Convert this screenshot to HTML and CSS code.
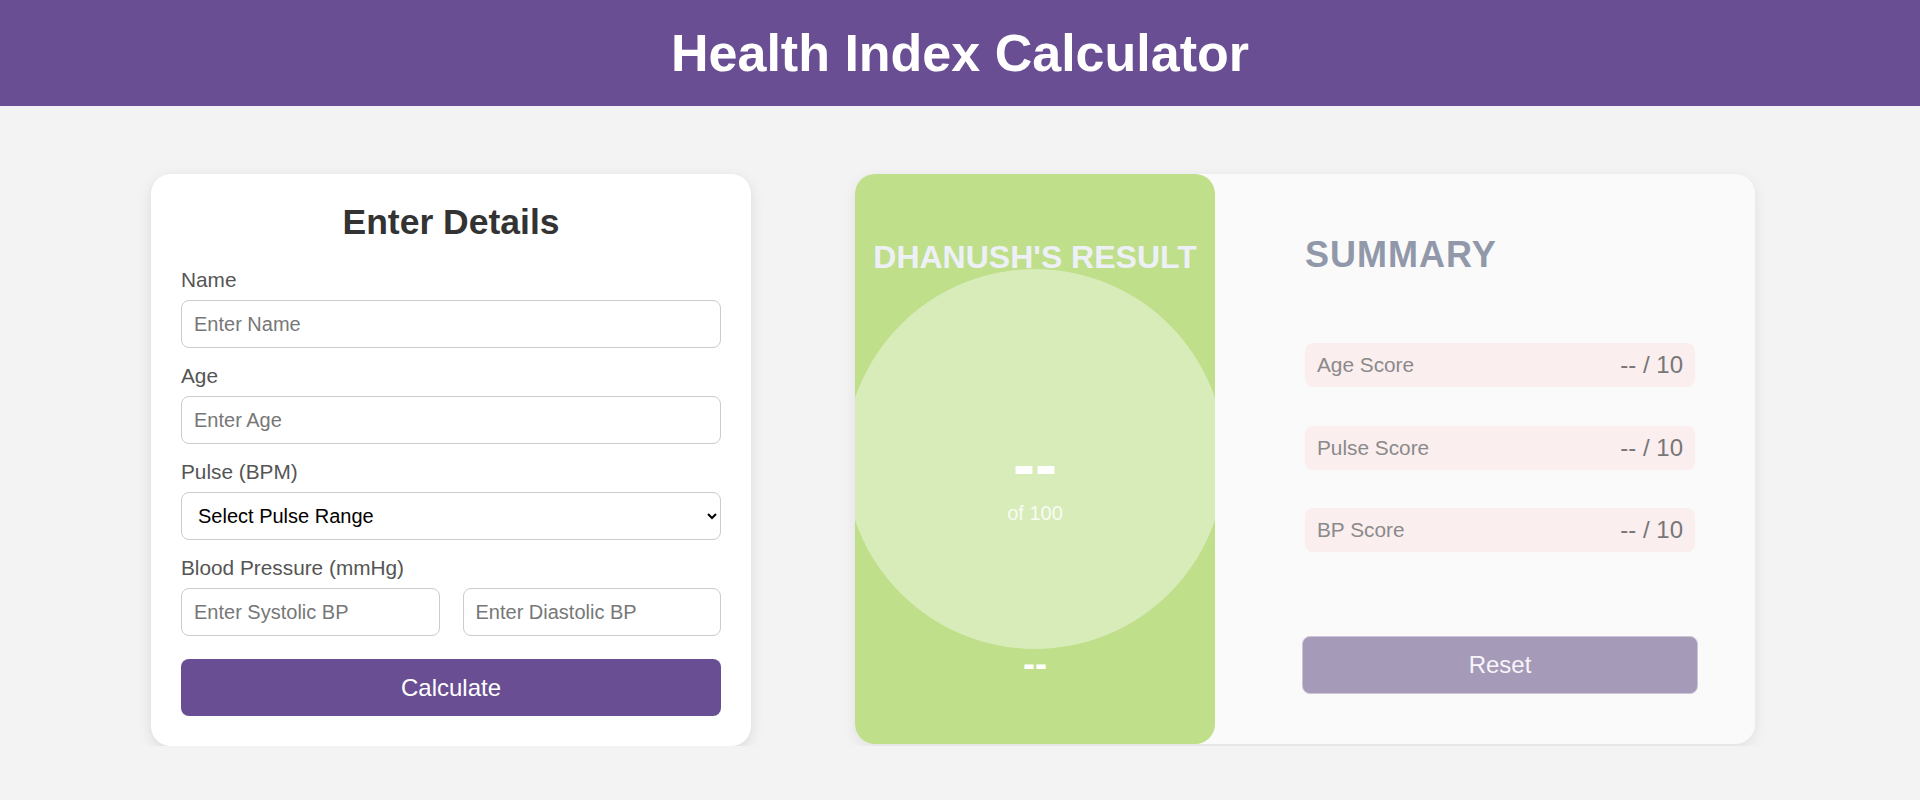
FILE: index.html
```html
<!DOCTYPE html>
<html lang="en">
<head>
<meta charset="utf-8">
<title>Health Index Calculator</title>
<link rel="stylesheet" href="styles.css">
</head>
<body>
<header class="topbar">
  <h1 class="topbar-title">Health Index Calculator</h1>
</header>
<main class="layout">
  <section class="form-card">
    <h2 class="form-title">Enter Details</h2>
    <div class="field">
      <label class="field-label" for="name">Name</label>
      <input class="field-input" id="name" type="text" placeholder="Enter Name">
    </div>
    <div class="field">
      <label class="field-label" for="age">Age</label>
      <input class="field-input" id="age" type="text" placeholder="Enter Age">
    </div>
    <div class="field">
      <label class="field-label" for="pulse">Pulse (BPM)</label>
      <select class="field-input field-select" id="pulse">
        <option>Select Pulse Range</option>
      </select>
    </div>
    <div class="field field-last">
      <label class="field-label" for="sys">Blood Pressure (mmHg)</label>
      <div class="bp-row">
        <input class="field-input" id="sys" type="text" placeholder="Enter Systolic BP">
        <input class="field-input" id="dia" type="text" placeholder="Enter Diastolic BP">
      </div>
    </div>
    <button class="btn-calc" type="button">Calculate</button>
  </section>

  <section class="result-card">
    <div class="score-panel">
      <h3 class="score-title">DHANUSH'S RESULT</h3>
      <div class="score-circle">
        <div class="score-value">--</div>
        <div class="score-of">of 100</div>
      </div>
      <div class="score-status">--</div>
    </div>
    <div class="summary">
      <h3 class="summary-title">SUMMARY</h3>
      <div class="summary-list">
        <div class="summary-row"><span class="row-label">Age Score</span><span class="row-value">-- / 10</span></div>
        <div class="summary-row"><span class="row-label">Pulse Score</span><span class="row-value">-- / 10</span></div>
        <div class="summary-row"><span class="row-label">BP Score</span><span class="row-value">-- / 10</span></div>
      </div>
      <button class="btn-reset" type="button">Reset</button>
    </div>
  </section>
</main>
</body>
</html>
```

FILE: styles.css
```css
* { box-sizing: border-box; }

body {
  margin: 0;
  background: #f3f3f3;
  font-family: "Liberation Sans", Arial, Helvetica, sans-serif;
}

.topbar {
  height: 106px;
  background: #6a4e93;
  display: flex;
  align-items: center;
  justify-content: center;
}

.topbar-title {
  margin: 0;
  font-size: 52px;
  line-height: 60px;
  font-weight: bold;
  color: #ffffff;
}

.layout {
  display: flex;
  align-items: flex-start;
  gap: 104px;
  padding: 68px 0 0 151px;
}

/* ---------- form card ---------- */
.form-card {
  width: 600px;
  flex-shrink: 0;
  background: #ffffff;
  border-radius: 20px;
  padding: 28px 30px 30px;
  box-shadow: 0 4px 14px rgba(0, 0, 0, 0.1);
}

.form-title {
  margin: 0 0 25px;
  text-align: center;
  font-size: 35.5px;
  line-height: 41px;
  font-weight: bold;
  color: #333333;
}

.field { margin-bottom: 16px; }
.field-last { margin-bottom: 23px; }

.field-label {
  display: block;
  font-size: 20.8px;
  line-height: 24px;
  margin-bottom: 8px;
  color: #555555;
}

.field-input {
  display: block;
  width: 100%;
  height: 48px;
  padding: 0 12px;
  border: 1px solid #cccccc;
  border-radius: 8px;
  background: #ffffff;
  font-family: inherit;
  font-size: 20px;
  color: #000000;
}

.field-input::placeholder { color: #777777; }

.bp-row {
  display: grid;
  grid-template-columns: 1fr 1fr;
  gap: 23px;
}

.btn-calc {
  display: block;
  width: 100%;
  height: 57px;
  border: none;
  border-radius: 8px;
  background: #6a4e93;
  color: #ffffff;
  font-family: inherit;
  font-size: 24px;
}

/* ---------- result card ---------- */
.result-card {
  width: 900px;
  height: 570px;
  flex-shrink: 0;
  display: flex;
  background: #fafafa;
  border-radius: 20px;
  box-shadow: 0 4px 14px rgba(0, 0, 0, 0.08);
}

.score-panel {
  width: 360px;
  flex-shrink: 0;
  background: #bfdf8b;
  border-radius: 20px;
  overflow: hidden;
  display: flex;
  flex-direction: column;
  align-items: center;
  padding-top: 67px;
}

.score-title {
  margin: 0;
  font-size: 32px;
  line-height: 32px;
  font-weight: bold;
  white-space: nowrap;
  color: #eef0f8;
}

.score-circle {
  width: 380px;
  height: 380px;
  flex-shrink: 0;
  margin-top: -4px;
  border-radius: 50%;
  background: rgba(255, 255, 255, 0.4);
  display: flex;
  flex-direction: column;
  align-items: center;
  padding-top: 162px;
}

.score-value {
  font-size: 66px;
  line-height: 66px;
  font-weight: bold;
  color: #ffffff;
}

.score-of {
  margin-top: 5.5px;
  font-size: 20px;
  line-height: 20px;
  color: rgba(255, 255, 255, 0.85);
}

.score-status {
  margin-top: -3px;
  font-size: 36px;
  line-height: 36px;
  font-weight: bold;
  color: #ffffff;
}

.summary {
  flex: 1;
  display: flex;
  flex-direction: column;
  padding: 60px 60px 0 90px;
}

.summary-title {
  margin: 0 0 68px;
  font-size: 36px;
  line-height: 41px;
  font-weight: bold;
  letter-spacing: 1px;
  color: #9098aa;
}

.summary-row {
  height: 44px;
  margin-bottom: 38.5px;
  padding: 0 12px;
  display: flex;
  align-items: center;
  justify-content: space-between;
  background: #fbeeee;
  border-radius: 8px;
}

.row-label {
  font-size: 20.8px;
  color: #8a8a8a;
}

.row-value {
  font-size: 24px;
  color: #777777;
}

.btn-reset {
  display: block;
  width: calc(100% + 6px);
  height: 58px;
  margin: 45px -3px 0;
  border: 1px solid #cdc4da;
  border-radius: 8px;
  background: #a59ab8;
  color: #f7f5fa;
  font-family: inherit;
  font-size: 24px;
}
```
